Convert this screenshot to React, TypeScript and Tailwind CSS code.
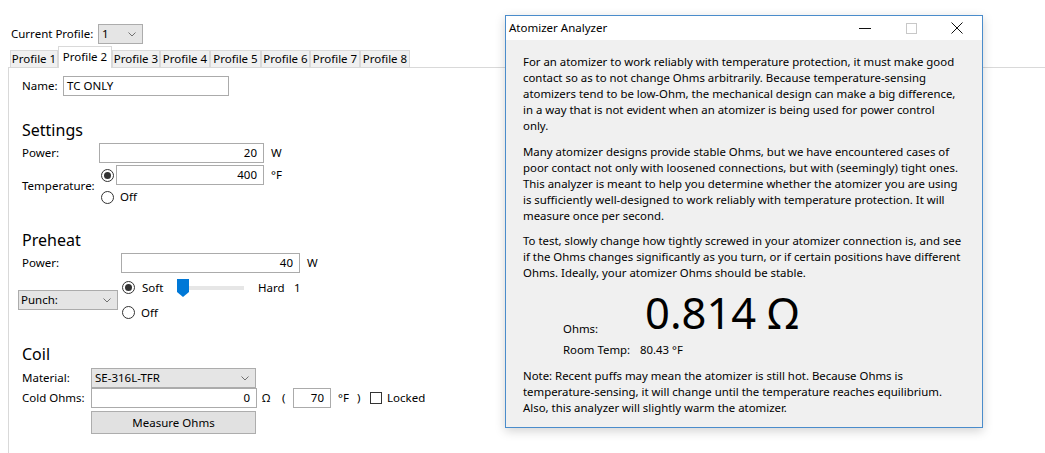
const font = { fontFamily: '"Noto Sans", "Open Sans", sans-serif' };

function Chevron() {
  return (
    <svg width="8" height="5" viewBox="0 0 8 5" className="shrink-0">
      <path d="M0.5 0.5 L4 4 L7.5 0.5" fill="none" stroke="#707070" strokeWidth="1" />
    </svg>
  );
}

function Radio({ checked }: { checked?: boolean }) {
  return (
    <div className="w-[13px] h-[13px] rounded-full border border-[#333] bg-white flex items-center justify-center shrink-0">
      {checked && <div className="w-[7px] h-[7px] rounded-full bg-[#333]" />}
    </div>
  );
}

function TextBox({ value, className }: { value: string; className: string }) {
  return (
    <div className={`h-[20px] border border-[#ababab] bg-white flex items-center justify-end pr-[6px] ${className}`}>
      {value}
    </div>
  );
}

const tabs = [
  { label: "Profile 1", w: "w-[48px]" },
  { label: "Profile 2", w: "w-[54px]", active: true },
  { label: "Profile 3", w: "w-[48px]" },
  { label: "Profile 4", w: "w-[50px]" },
  { label: "Profile 5", w: "w-[51px]" },
  { label: "Profile 6", w: "w-[49px]" },
  { label: "Profile 7", w: "w-[50px]" },
  { label: "Profile 8", w: "w-[50px]" },
];

function Para({ lines, className = "" }: { lines: string[]; className?: string }) {
  return (
    <div className={`whitespace-nowrap leading-[16px] ${className}`}>
      {lines.map((l, i) => (
        <div key={i}>{l}</div>
      ))}
    </div>
  );
}

function Analyzer() {
  return (
    <div className="absolute left-[505px] top-[15px] w-[478px] h-[413px] border border-[#4a8ccb] bg-[#f0f0f0] shadow-[0_3px_10px_rgba(0,0,0,0.18)] flex flex-col">
      <div className="h-[24px] bg-white flex items-center shrink-0">
        <div className="pl-[3px] flex-1">Atomizer Analyzer</div>
        <div className="w-[46px] h-full flex items-center justify-center">
          <div className="w-[12px] h-px bg-[#111]" />
        </div>
        <div className="w-[46px] h-full flex items-center justify-center">
          <div className="w-[11px] h-[11px] border border-[#c8c8c8]" />
        </div>
        <div className="w-[46px] h-full flex items-center justify-center mr-[2px]">
          <svg width="12" height="12" viewBox="0 0 12 12">
            <path d="M0.5 0.5 L11.5 11.5 M11.5 0.5 L0.5 11.5" stroke="#111" strokeWidth="1" />
          </svg>
        </div>
      </div>
      <div className="pl-[17px] pt-[14px] text-[11.4px]">
        <Para
          lines={[
            "For an atomizer to work reliably with temperature protection, it must make good",
            "contact so as to not change Ohms arbitrarily. Because temperature-sensing",
            "atomizers tend to be low-Ohm, the mechanical design can make a big difference,",
            "in a way that is not evident when an atomizer is being used for power control",
            "only.",
          ]}
        />
        <Para
          className="mt-[10px]"
          lines={[
            "Many atomizer designs provide stable Ohms, but we have encountered cases of",
            "poor contact not only with loosened connections, but with (seemingly) tight ones.",
            "This analyzer is meant to help you determine whether the atomizer you are using",
            "is sufficiently well-designed to work reliably with temperature protection. It will",
            "measure once per second.",
          ]}
        />
        <Para
          className="mt-[9px]"
          lines={[
            "To test, slowly change how tightly screwed in your atomizer connection is, and see",
            "if the Ohms changes significantly as you turn, or if certain positions have different",
            "Ohms. Ideally, your atomizer Ohms should be stable.",
          ]}
        />
        <div className="ml-[40px] mt-[9px] flex items-baseline">
          <div className="w-[82px] relative top-[4px]">Ohms:</div>
          <div className="text-[43.5px] leading-[45px]">0.814 Ω</div>
        </div>
        <div className="ml-[40px] mt-[7px] flex leading-[16px]">
          <div className="w-[77px]">Room Temp:</div>
          <div>80.43 °F</div>
        </div>
        <Para
          className="mt-[10px]"
          lines={[
            "Note: Recent puffs may mean the atomizer is still hot. Because Ohms is",
            "temperature-sensing, it will change until the temperature reaches equilibrium.",
            "Also, this analyzer will slightly warm the atomizer.",
          ]}
        />
      </div>
    </div>
  );
}

export default function App() {
  return (
    <div className="relative w-[1045px] h-[453px] bg-white overflow-hidden text-[11.5px] text-black" style={font}>
      {/* current profile */}
      <div className="pt-[24px] pl-[11px] flex items-center h-[44px]">
        <span className="w-[87px]">Current Profile:</span>
        <div className="w-[45px] h-[20px] bg-[#e5e5e5] border border-[#acacac] flex items-center justify-between pl-[3px] pr-[6px]">
          <span>1</span>
          <Chevron />
        </div>
      </div>

      {/* tabs */}
      <div className="mt-[3px] ml-[8px] h-[21px] flex items-end border-b border-[#d9d9d9] whitespace-nowrap">
        <div className="w-[2px] shrink-0" />
        {tabs.map((t) =>
          t.active ? (
            <div
              key={t.label}
              className={`${t.w} shrink-0 h-[22px] -mb-px relative bg-white border border-b-0 border-[#d9d9d9] flex items-start justify-center pt-px`}
            >
              {t.label}
            </div>
          ) : (
            <div
              key={t.label}
              className={`${t.w} shrink-0 h-[17px] bg-[#f0f0f0] border border-b-0 border-[#d9d9d9] flex items-center justify-center`}
            >
              {t.label}
            </div>
          )
        )}
      </div>

      {/* panel */}
      <div className="ml-[8px] border-l border-[#d9d9d9] h-[400px] pl-[13px] pt-[8px]">
        <div className="flex items-center h-[20px]">
          <span className="w-[41px]">Name:</span>
          <div className="w-[166px] h-[20px] border border-[#ababab] flex items-center pl-[3px]">TC ONLY</div>
        </div>

        {/* settings */}
        <div className="mt-[24px] text-[16px] leading-[21px]">Settings</div>
        <div className="mt-[2px] flex items-center h-[20px]">
          <span className="w-[77px]">Power:</span>
          <TextBox value="20" className="w-[165px]" />
          <span className="ml-[7px]">W</span>
        </div>
        <div className="mt-[2px] flex items-center">
          <span className="w-[77px]">Temperature:</span>
          <div className="flex flex-col gap-[2px]">
            <div className="flex items-center h-[20px]">
              <div className="ml-[2px] w-[15px]">
                <Radio checked />
              </div>
              <TextBox value="400" className="w-[148px]" />
              <span className="ml-[7px]">°F</span>
            </div>
            <div className="flex items-center h-[20px] ml-[2px]">
              <Radio />
              <span className="ml-[6px]">Off</span>
            </div>
          </div>
        </div>

        {/* preheat */}
        <div className="mt-[23px] text-[16px] leading-[21px]">Preheat</div>
        <div className="mt-[2px] flex items-center h-[20px]">
          <span className="w-[99px]">Power:</span>
          <TextBox value="40" className="w-[179px]" />
          <span className="ml-[7px]">W</span>
        </div>
        <div className="mt-[2px] flex items-center">
          <div className="-ml-[4px] w-[100px] h-[20px] bg-[#e5e5e5] border border-[#acacac] flex items-center justify-between pl-[2px] pr-[6px]">
            <span>Punch:</span>
            <Chevron />
          </div>
          <div className="ml-[4px] flex flex-col">
            <div className="flex items-center h-[25px]">
              <Radio checked />
              <span className="ml-[7px] w-[35px]">Soft</span>
              <div className="relative w-[67px] h-[20px] flex items-center">
                <div className="w-full h-[4px] bg-[#e6e6e6]" />
                <svg width="12" height="18" viewBox="0 0 12 18" className="absolute left-0 top-[1px]">
                  <path d="M0 0 H12 V13 L6 18 L0 13 Z" fill="#0078d7" />
                </svg>
              </div>
              <span className="ml-[14px] w-[36px]">Hard</span>
              <span>1</span>
            </div>
            <div className="flex items-center h-[25px]">
              <Radio />
              <span className="ml-[6px]">Off</span>
            </div>
          </div>
        </div>

        {/* coil */}
        <div className="mt-[19px] text-[16px] leading-[21px]">Coil</div>
        <div className="mt-[3px] flex items-center h-[20px]">
          <span className="w-[69px]">Material:</span>
          <div className="w-[165px] h-[20px] bg-[#e5e5e5] border border-[#acacac] flex items-center justify-between pl-[3px] pr-[6px]">
            <span>SE-316L-TFR</span>
            <Chevron />
          </div>
        </div>
        <div className="flex items-center h-[20px]">
          <span className="w-[69px]">Cold Ohms:</span>
          <TextBox value="0" className="w-[166px]" />
          <span className="ml-[5px] w-[20px]">Ω</span>
          <span className="w-[11px]">(</span>
          <TextBox value="70" className="w-[38px]" />
          <span className="ml-[7px] w-[19px]">°F</span>
          <span className="w-[13px]">)</span>
          <div className="w-[12px] h-[12px] border border-[#333] bg-white" />
          <span className="ml-[5px]">Locked</span>
        </div>
        <div className="mt-[3px] ml-[69px] w-[165px] h-[23px] bg-[#e1e1e1] border border-[#adadad] flex items-center justify-center">
          Measure Ohms
        </div>
      </div>

      <Analyzer />
    </div>
  );
}
